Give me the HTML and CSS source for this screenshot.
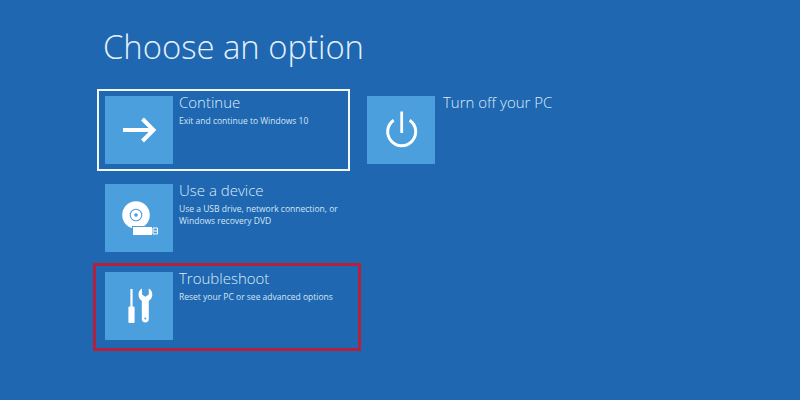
FILE: index.html
```html
<!DOCTYPE html>
<html lang="en">
<head>
<meta charset="utf-8">
<title>Choose an option</title>
<link rel="stylesheet" href="styles.css">
</head>
<body>
<main class="screen">
  <h1 class="title">Choose an option</h1>
  <div class="columns">
    <div class="column">
      <div class="option option-focus">
        <div class="tile">
          <svg class="icon" viewBox="0 0 68 68"><path d="M18 34H48M37.500 23L48.500 34 37.500 45" fill="none" stroke="#fff" stroke-width="4"/></svg>
        </div>
        <div class="text">
          <div class="name">Continue</div>
          <div class="desc">Exit and continue to Windows 10</div>
        </div>
      </div>
      <div class="option">
        <div class="tile">
          <svg class="icon" viewBox="0 0 68 68">
            <circle cx="31" cy="31" r="13.800" fill="#fff"/>
            <circle cx="31" cy="31" r="5.800" fill="none" stroke="#4a9fdc" stroke-width="1.100"/>
            <circle cx="31" cy="31" r="1.800" fill="#4a9fdc"/>
            <rect x="27" y="42" width="21" height="10" fill="#4a9fdc"/>
            <rect x="28" y="43" width="19" height="8" fill="#fff"/>
            <path d="M48 44H52.500V50H48ZM48.500 47H52" fill="none" stroke="#fff" stroke-width="1"/>
          </svg>
        </div>
        <div class="text">
          <div class="name">Use a device</div>
          <div class="desc">Use a USB drive, network connection, or<br>Windows recovery DVD</div>
        </div>
      </div>
      <div class="option option-marked">
        <div class="tile">
          <svg class="icon" viewBox="0 0 68 68">
            <path d="M25.400 17H27.600V34.500H28.400C29.200 34.500 29.600 34.900 29.600 35.700V49.500C29.600 50.500 29.100 51 28.100 51H24.900C23.900 51 23.400 50.500 23.400 49.500V35.700C23.400 34.900 23.800 34.500 24.600 34.500H25.400Z" fill="#fff"/>
            <path d="M37 16.500C35 17.500 33.500 19.500 33.500 22.500C33.500 25.500 34.800 27.500 36.800 28.800V47C36.800 49.300 38.200 50.500 40.300 50.500S43.800 49.300 43.800 47V28.800C46 27.500 47.300 25.500 47.300 22.500C47.300 19.500 45.800 17.500 43.800 16.500V22.500L40.400 24.800 37 22.500Z" fill="#fff"/>
            <circle cx="40.300" cy="46.500" r="1" fill="#4a9fdc"/>
          </svg>
        </div>
        <div class="text">
          <div class="name">Troubleshoot</div>
          <div class="desc">Reset your PC or see advanced options</div>
        </div>
      </div>
    </div>
    <div class="column column-side">
      <div class="option">
        <div class="tile">
          <svg class="icon" viewBox="0 0 68 68"><path d="M26.700 24.200A14 14 0 1 0 42.700 24.200" fill="none" stroke="#fff" stroke-width="3"/><path d="M34.700 15.500V37" fill="none" stroke="#fff" stroke-width="2.800"/></svg>
        </div>
        <div class="text">
          <div class="name">Turn off your PC</div>
        </div>
      </div>
    </div>
  </div>
</main>
</body>
</html>
```
FILE: styles.css
```css
* { box-sizing: border-box; }
html, body { margin: 0; height: 100%; }
body { background: #1f67b1; overflow: hidden; }
.screen {
  width: 800px;
  height: 400px;
  padding: 21px 0 0 103px;
  color: #fff;
  font-family: "Open Sans", "Liberation Sans", sans-serif;
  font-weight: 300;
}
.title {
  margin: 0 0 24px;
  font-size: 32.800px;
  line-height: 51px;
  font-weight: 300;
  color: #e4f1fa;
}
.columns { display: flex; gap: 11px; }
.column { display: flex; flex-direction: column; gap: 20px; }
.option {
  position: relative;
  display: flex;
  width: 249px;
  height: 68px;
  margin-left: 2px;
}
.option-focus::after,
.option-marked::after {
  content: "";
  position: absolute;
  pointer-events: none;
}
.option-focus::after { inset: -7px 4px -7px -8px; border: 2px solid #f2f7fb; }
.option-marked::after { inset: -9px -7px -11px -12px; border: 3px solid #b3213f; }
.tile {
  flex: none;
  width: 68px;
  height: 68px;
  margin-right: 6px;
  background: #4a9fdc;
}
.column-side .tile { margin-right: 8px; }
.icon { display: block; width: 68px; height: 68px; }
.text { min-width: 0; margin-top: -1px; white-space: nowrap; }
.name { font-size: 15px; line-height: 15px; color: #dcecf8; }
.desc { margin-top: 5px; font-size: 8.500px; line-height: 12px; font-weight: 400; color: #d3e6f5; }
```
